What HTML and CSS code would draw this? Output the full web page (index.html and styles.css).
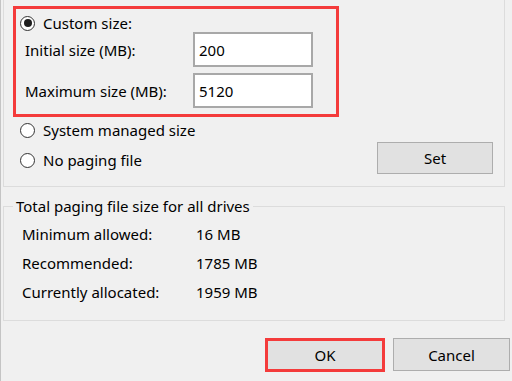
FILE: index.html
```html
<!DOCTYPE html>
<html>
<head>
<meta charset="utf-8">
<link rel="stylesheet" href="styles.css">
</head>
<body>
<div class="dialog">
  <div class="group drive-group">
    <div class="custom">
      <div class="radio-row first"><span class="radio checked"></span><span>Custom size:</span></div>
      <div class="fields">
        <span class="field-label">Initial size (MB):</span><span class="input">200</span>
        <span class="field-label">Maximum size (MB):</span><span class="input">5120</span>
      </div>
    </div>
    <div class="options">
      <div class="option-list">
        <div class="radio-row"><span class="radio"></span><span>System managed size</span></div>
        <div class="radio-row"><span class="radio"></span><span>No paging file</span></div>
      </div>
      <button class="btn set">Set</button>
    </div>
  </div>
  <fieldset class="totals">
    <legend>Total paging file size for all drives</legend>
    <div class="stats">
      <span>Minimum allowed:</span><span>16 MB</span>
      <span>Recommended:</span><span>1785 MB</span>
      <span>Currently allocated:</span><span>1959 MB</span>
    </div>
  </fieldset>
  <div class="actions">
    <button class="btn ok">OK</button>
    <button class="btn cancel">Cancel</button>
  </div>
</div>
</body>
</html>
```

FILE: styles.css
```css
html, body {
  margin: 0;
  padding: 0;
  background: #f0f0f0;
}
body {
  font-family: "Noto Sans", "Open Sans", sans-serif;
  font-size: 15px;
  color: #000;
  width: 512px;
  height: 381px;
  overflow: hidden;
}
.dialog {
  height: 381px;
  box-sizing: border-box;
  border-left: 1px solid #c4c4c4;
  padding-left: 2px;
}
.group {
  width: 502px;
  box-sizing: border-box;
  border: 1px solid #dcdcdc;
}
.drive-group {
  border-top: none;
  height: 187px;
  padding-top: 6px;
}
.custom {
  margin: 0 0 0 9px;
  width: 326px;
  height: 111px;
  box-sizing: border-box;
  border: 3px solid #f43b3b;
}
.radio-row {
  display: flex;
  align-items: center;
  height: 20px;
  gap: 8px;
  margin-left: -1px;
}
.radio-row.first {
  margin: 4px 0 0 4px;
}
.radio {
  width: 15px;
  height: 15px;
  box-sizing: border-box;
  border: 1px solid #333;
  border-radius: 50%;
  background: #fff;
  display: flex;
  align-items: center;
  justify-content: center;
  flex: none;
}
.radio.checked::after {
  content: "";
  width: 8px;
  height: 8px;
  border-radius: 50%;
  background: #1e1e1e;
}
.fields {
  display: grid;
  grid-template-columns: 168px 120px;
  grid-auto-rows: 35px;
  row-gap: 6px;
  align-items: center;
  margin-top: -1px;
  padding-left: 9px;
}
.input {
  height: 35px;
  box-sizing: border-box;
  border: 2px solid #a8a8a8;
  background: #fff;
  padding: 0 4px;
  display: flex;
  align-items: center;
}
.options {
  display: flex;
  justify-content: space-between;
  margin-top: 3px;
  padding-left: 17px;
  padding-right: 11px;
}
.option-list {
  display: flex;
  flex-direction: column;
  gap: 10px;
}
.btn {
  font: inherit;
  color: #000;
  background: #e1e1e1;
  border: 1px solid #adadad;
  box-sizing: border-box;
  padding: 0;
  margin: 0;
}
.set {
  width: 116px;
  height: 32px;
  margin-top: 22px;
}
.totals {
  width: 502px;
  box-sizing: border-box;
  margin: 9px 0 0 0;
  border: 1px solid #dcdcdc;
  padding: 0 0 14px 9px;
}
.totals legend {
  padding: 0 3px;
  line-height: 20px;
}
.stats {
  display: grid;
  grid-template-columns: 174px auto;
  grid-auto-rows: 29px;
  align-items: center;
  padding-left: 9px;
  margin-top: 3px;
}
.actions {
  display: flex;
  justify-content: flex-end;
  gap: 8px;
  margin-top: 17px;
  padding-right: 2px;
}
.ok {
  width: 120px;
  height: 34px;
  border: 3px solid #f43b3b;
}
.cancel {
  width: 117px;
  height: 33px;
}
```
